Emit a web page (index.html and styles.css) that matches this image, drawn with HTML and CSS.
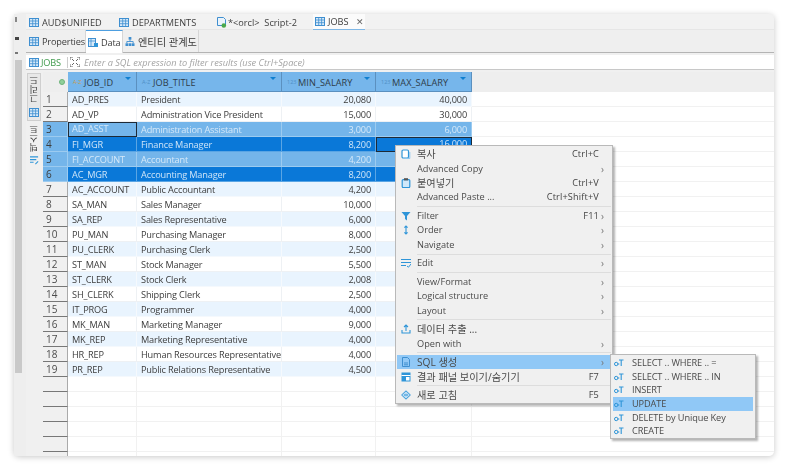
FILE: index.html
```html
<!DOCTYPE html>
<html lang="ko">
<head>
<meta charset="utf-8">
<title>JOBS</title>
<link rel="stylesheet" href="styles.css">
</head>
<body>
<svg class="defs" width="0" height="0">
  <symbol id="tbl" viewBox="0 0 10 9"><rect x=".5" y=".5" width="9" height="8" fill="#d7e9f8" stroke="#3f8fd0"/><path d="M.5 3h9M.5 5.7h9M3.7.5v8M6.6.5v8" stroke="#3f8fd0" stroke-width=".8" fill="none"/></symbol>
  <symbol id="gen" viewBox="0 0 10 8"><circle cx="2.2" cy="5" r="1.7" fill="none" stroke="#2f95d8" stroke-width="1"/><path d="M3.9 5h1.4M5 1h4.5M7.2 1v6" stroke="#2f95d8" stroke-width="1.1" fill="none"/></symbol>
</svg>
<div class="window">
  <div class="strip">
    <span class="mark mark-a"></span>
    <span class="mark mark-b"></span>
    <span class="mark mark-c"></span>
    <span class="scroll"></span>
  </div>
  <div class="main">
    <div class="tabs">
      <div class="tab tab-a"><svg class="ic"><use href="#tbl"/></svg>AUD$UNIFIED</div>
      <div class="tab tab-b"><svg class="ic"><use href="#tbl"/></svg>DEPARTMENTS</div>
      <div class="tab tab-c"><svg class="ic ic-script" viewBox="0 0 11 11"><path d="M1.5.5h6l2 2v6h-8z" fill="#eaf3fb" stroke="#3f8fd0"/><circle cx="7.8" cy="8.5" r="2.3" fill="#4aa84a"/></svg>*&lt;orcl&gt;&nbsp; Script-2</div>
      <div class="tab tab-on"><svg class="ic"><use href="#tbl"/></svg>JOBS<span class="close">✕</span></div>
    </div>
    <div class="subtabs">
      <div class="sub sub-a"><svg class="ic"><use href="#tbl"/></svg>Properties</div>
      <div class="sub sub-on"><svg class="ic" viewBox="0 0 10 9"><rect x=".5" y=".5" width="7" height="8" fill="#d7e9f8" stroke="#3f8fd0"/><path d="M.5 3h7M3 .5v8" stroke="#3f8fd0" stroke-width=".8"/><rect x="6" y="5" width="4" height="4" fill="#2f95d8"/></svg>Data</div>
      <div class="sub sub-c"><svg class="ic" viewBox="0 0 10 10"><rect x="3.5" y="0" width="3" height="3" fill="#3f8fd0"/><path d="M5 3v2M1.5 7V5h7v2" stroke="#3f8fd0" fill="none"/><rect x="0" y="7" width="3" height="3" fill="#3f8fd0"/><rect x="3.5" y="7" width="3" height="3" fill="#3f8fd0"/><rect x="7" y="7" width="3" height="3" fill="#3f8fd0"/></svg><span class="ko">엔티티 관계도</span></div>
    </div>
    <div class="filter-wrap">
      <div class="filter">
        <svg class="ic"><use href="#tbl"/></svg><span class="filter-name">JOBS</span><span class="filter-sep"></span>
        <svg class="ic-expand" viewBox="0 0 10 10"><path d="M0 3V0h3M7 0h3v3M10 7v3H7M3 10H0V7M2 2l2 2M8 2 6 4M8 8 6 6M2 8l2-2" fill="none" stroke="#555" stroke-width=".9"/></svg>
        <span class="filter-hint">Enter a SQL expression to filter results (use Ctrl+Space)</span>
      </div>
    </div>
    <div class="gridpane">
      <div class="side">
        <div class="side-box">
          <span class="side-text">그리드</span>
          <svg class="side-ic"><use href="#tbl"/></svg>
        </div>
        <div class="side-free">
          <span class="side-text">텍스트</span>
          <svg class="side-ic2" viewBox="0 0 10 10"><path d="M0 1h9M0 4h7M0 7h4" stroke="#2f95d8" stroke-width="1.2" fill="none"/><path d="m6 9 3-3" stroke="#2f95d8" stroke-width="1.2"/></svg>
        </div>
      </div>
      <div class="table">
        <div class="row head">
          <div class="corner"><span class="dot"></span></div>
          <div class="hc"><span class="ty ty-az">A-Z</span>JOB_ID<span class="tri"></span></div>
          <div class="hc"><span class="ty">A-Z</span>JOB_TITLE<span class="tri"></span></div>
          <div class="hc"><span class="ty">123</span>MIN_SALARY<span class="tri"></span></div>
          <div class="hc"><span class="ty">123</span>MAX_SALARY<span class="tri"></span></div>
          <div class="rest"></div>
        </div>
        <div class="row odd"><div class="rh">1</div><div class="c">AD_PRES</div><div class="c">President</div><div class="c n">20,080</div><div class="c n">40,000</div><div class="rest"></div></div>
        <div class="row"><div class="rh">2</div><div class="c">AD_VP</div><div class="c">Administration Vice President</div><div class="c n">15,000</div><div class="c n">30,000</div><div class="rest"></div></div>
        <div class="row sel"><div class="rh">3</div><div class="c focus">AD_ASST</div><div class="c">Administration Assistant</div><div class="c n">3,000</div><div class="c n">6,000</div><div class="rest"></div></div>
        <div class="row sel2"><div class="rh">4</div><div class="c">FI_MGR</div><div class="c">Finance Manager</div><div class="c n">8,200</div><div class="c n focus">16,000</div><div class="rest"></div></div>
        <div class="row sel"><div class="rh">5</div><div class="c">FI_ACCOUNT</div><div class="c">Accountant</div><div class="c n">4,200</div><div class="c n"></div><div class="rest"></div></div>
        <div class="row sel2"><div class="rh">6</div><div class="c">AC_MGR</div><div class="c">Accounting Manager</div><div class="c n">8,200</div><div class="c n"></div><div class="rest"></div></div>
        <div class="row odd"><div class="rh">7</div><div class="c">AC_ACCOUNT</div><div class="c">Public Accountant</div><div class="c n">4,200</div><div class="c n"></div><div class="rest"></div></div>
        <div class="row"><div class="rh">8</div><div class="c">SA_MAN</div><div class="c">Sales Manager</div><div class="c n">10,000</div><div class="c n"></div><div class="rest"></div></div>
        <div class="row odd"><div class="rh">9</div><div class="c">SA_REP</div><div class="c">Sales Representative</div><div class="c n">6,000</div><div class="c n"></div><div class="rest"></div></div>
        <div class="row"><div class="rh">10</div><div class="c">PU_MAN</div><div class="c">Purchasing Manager</div><div class="c n">8,000</div><div class="c n"></div><div class="rest"></div></div>
        <div class="row odd"><div class="rh">11</div><div class="c">PU_CLERK</div><div class="c">Purchasing Clerk</div><div class="c n">2,500</div><div class="c n"></div><div class="rest"></div></div>
        <div class="row"><div class="rh">12</div><div class="c">ST_MAN</div><div class="c">Stock Manager</div><div class="c n">5,500</div><div class="c n"></div><div class="rest"></div></div>
        <div class="row odd"><div class="rh">13</div><div class="c">ST_CLERK</div><div class="c">Stock Clerk</div><div class="c n">2,008</div><div class="c n"></div><div class="rest"></div></div>
        <div class="row"><div class="rh">14</div><div class="c">SH_CLERK</div><div class="c">Shipping Clerk</div><div class="c n">2,500</div><div class="c n"></div><div class="rest"></div></div>
        <div class="row odd"><div class="rh">15</div><div class="c">IT_PROG</div><div class="c">Programmer</div><div class="c n">4,000</div><div class="c n"></div><div class="rest"></div></div>
        <div class="row"><div class="rh">16</div><div class="c">MK_MAN</div><div class="c">Marketing Manager</div><div class="c n">9,000</div><div class="c n"></div><div class="rest"></div></div>
        <div class="row odd"><div class="rh">17</div><div class="c">MK_REP</div><div class="c">Marketing Representative</div><div class="c n">4,000</div><div class="c n"></div><div class="rest"></div></div>
        <div class="row"><div class="rh">18</div><div class="c">HR_REP</div><div class="c">Human Resources Representative</div><div class="c n">4,000</div><div class="c n"></div><div class="rest"></div></div>
        <div class="row odd"><div class="rh">19</div><div class="c">PR_REP</div><div class="c">Public Relations Representative</div><div class="c n">4,500</div><div class="c n"></div><div class="rest"></div></div>
        <div class="row blank"><div class="rh"></div><div class="c"></div><div class="c"></div><div class="c"></div><div class="c"></div><div class="rest"></div></div>
        <div class="row blank"><div class="rh"></div><div class="c"></div><div class="c"></div><div class="c"></div><div class="c"></div><div class="rest"></div></div>
        <div class="row blank"><div class="rh"></div><div class="c"></div><div class="c"></div><div class="c"></div><div class="c"></div><div class="rest"></div></div>
        <div class="row blank"><div class="rh"></div><div class="c"></div><div class="c"></div><div class="c"></div><div class="c"></div><div class="rest"></div></div>
        <div class="row blank"><div class="rh"></div><div class="c"></div><div class="c"></div><div class="c"></div><div class="c"></div><div class="rest"></div></div>
        <div class="row blank"><div class="rh"></div><div class="c"></div><div class="c"></div><div class="c"></div><div class="c"></div><div class="rest"></div></div>
      </div>
    </div>
  </div>

  <div class="menu">
    <div class="mi"><svg class="mic" viewBox="0 0 10 10"><rect x="1" y="1" width="6.5" height="8" rx="1.2" fill="#fff" stroke="#2f95d8" stroke-width="1.2"/><path d="M8.8 3v6.5H4" fill="none" stroke="#8cc6ee"/></svg><span class="ml ko">복사</span><span class="ms">Ctrl+C</span><span class="ma"></span></div>
    <div class="mi"><span class="mic"></span><span class="ml">Advanced Copy</span><span class="ma">›</span></div>
    <div class="mi"><svg class="mic" viewBox="0 0 10 10"><rect x="1.2" y="1.6" width="7.6" height="8" rx="1" fill="#cfe8fa" stroke="#2f95d8" stroke-width="1.2"/><rect x="3" y=".2" width="4" height="2.2" fill="#555"/></svg><span class="ml ko">붙여넣기</span><span class="ms">Ctrl+V</span><span class="ma"></span></div>
    <div class="mi"><span class="mic"></span><span class="ml">Advanced Paste ...</span><span class="ms">Ctrl+Shift+V</span><span class="ma"></span></div>
    <div class="msep"></div>
    <div class="mi"><svg class="mic" viewBox="0 0 10 10"><path d="M.5 1h9L6 5v4.5L4 8V5z" fill="#2f95d8"/></svg><span class="ml">Filter</span><span class="ms">F11</span><span class="ma">›</span></div>
    <div class="mi"><svg class="mic" viewBox="0 0 10 10"><path d="M5 1v8M3.4 2.6 5 1l1.6 1.6M3.4 7.4 5 9l1.6-1.6" fill="none" stroke="#2f95d8" stroke-width="1.1"/></svg><span class="ml">Order</span><span class="ma">›</span></div>
    <div class="mi"><span class="mic"></span><span class="ml">Navigate</span><span class="ma">›</span></div>
    <div class="msep"></div>
    <div class="mi"><svg class="mic" viewBox="0 0 10 10"><path d="M0 1.5h10M0 4.5h10M0 7.5h5" stroke="#2f95d8" stroke-width="1.2" fill="none"/><path d="m6 8 1.5 1.2L10 6" stroke="#2f95d8" fill="none"/></svg><span class="ml">Edit</span><span class="ma">›</span></div>
    <div class="msep"></div>
    <div class="mi"><span class="mic"></span><span class="ml">View/Format</span><span class="ma">›</span></div>
    <div class="mi"><span class="mic"></span><span class="ml">Logical structure</span><span class="ma">›</span></div>
    <div class="mi"><span class="mic"></span><span class="ml">Layout</span><span class="ma">›</span></div>
    <div class="msep"></div>
    <div class="mi"><svg class="mic" viewBox="0 0 10 10"><path d="M5 7V1M3 3l2-2 2 2M1 6v3h8V6" fill="none" stroke="#2f95d8" stroke-width="1.1"/></svg><span class="ml ko">데이터 추출 ...</span><span class="ma"></span></div>
    <div class="mi"><span class="mic"></span><span class="ml">Open with</span><span class="ma">›</span></div>
    <div class="msep"></div>
    <div class="mi hot"><svg class="mic" viewBox="0 0 10 10"><path d="M1.5.5h5l2 2v7h-7z" fill="none" stroke="#3f8fd0"/><path d="M3 6h4M3 7.8h4" stroke="#3f8fd0"/></svg><span class="ml ko">SQL 생성</span><span class="ma">›</span></div>
    <div class="mi"><svg class="mic" viewBox="0 0 10 10"><rect x=".5" y=".5" width="9" height="9" fill="#2f95d8"/><path d="M.5 3.5h9" stroke="#fff"/><rect x="5" y="5" width="3.5" height="3.5" fill="#fff"/></svg><span class="ml ko">결과 패널 보이기/숨기기</span><span class="ms">F7</span><span class="ma"></span></div>
    <div class="msep"></div>
    <div class="mi"><svg class="mic" viewBox="0 0 10 10"><path d="M5 .8 9.4 5 5 9.2.6 5z" fill="#bcdcf3" stroke="#2f95d8"/><path d="M3 5h4" stroke="#2f95d8"/></svg><span class="ml ko">새로 고침</span><span class="ms">F5</span><span class="ma"></span></div>
  </div>

  <div class="submenu">
    <div class="si"><svg class="sic"><use href="#gen"/></svg>SELECT .. WHERE .. =</div>
    <div class="si"><svg class="sic"><use href="#gen"/></svg>SELECT .. WHERE .. IN</div>
    <div class="si"><svg class="sic"><use href="#gen"/></svg>INSERT</div>
    <div class="si hot"><svg class="sic"><use href="#gen"/></svg>UPDATE</div>
    <div class="si"><svg class="sic"><use href="#gen"/></svg>DELETE by Unique Key</div>
    <div class="si"><svg class="sic"><use href="#gen"/></svg>CREATE</div>
  </div>
</div>
</body>
</html>
```

FILE: styles.css
```css
* { box-sizing: border-box; }
html, body { margin: 0; padding: 0; background: #fff; }
body {
  width: 789px;
  height: 470px;
  overflow: hidden;
  padding: 14px 15px 14px 14px;
  font-family: "Open Sans", "Noto Sans CJK KR", sans-serif;
  font-size: 9.2px;
  letter-spacing: -.16px;
  color: #3c3c3c;
}
.ko { font-size: 10.2px; letter-spacing: 0; }
.defs { position: absolute; }
.window {
  position: relative;
  width: 760px;
  height: 442px;
  display: flex;
  background: #f0f0f0;
  border-radius: 5px;
  box-shadow: 0 1px 6px rgba(0, 0, 0, .22);
  filter: blur(.45px);
}
.strip {
  width: 12px;
  flex: none;
  position: relative;
  background: #eee;
}
.mark { position: absolute; left: 1px; background: #444; }
.mark-a { top: 3px; width: 2px; height: 5px; background: #888; }
.mark-b { top: 23px; width: 4px; height: 3px; }
.mark-c { top: 38px; width: 3px; height: 2px; background: #777; }
.scroll {
  position: absolute;
  left: 1px;
  top: 46px;
  width: 7px;
  height: 313px;
  background: #c9c9c9;
}
.main { flex: 1; min-width: 0; display: flex; flex-direction: column; overflow: hidden; border-radius: 0 5px 5px 0; }
.tabs {
  height: 16px;
  flex: none;
  display: flex;
  align-items: center;
  border-bottom: 1px solid #e6e6e6;
  background: #f2f2f2;
}
.tab { display: flex; align-items: center; height: 15px; padding-top: 1px; white-space: nowrap; letter-spacing: 0; }
.ic { width: 10px; height: 9px; margin-right: 3px; flex: none; }
.ic-script { width: 11px; height: 11px; margin-right: 1px; }
.tab-a { margin-left: 3px; width: 90px; }
.tab-b { width: 97px; }
.tab-c { width: 97px; }
.tab-on {
  width: 52px;
  padding-left: 2px;
  height: 16px;
  background: #fbfbfb;
  border-bottom: 1.5px solid #7fb7e6;
}
.close { margin-left: 7px; font-size: 9px; color: #666; }
.subtabs {
  height: 23px;
  flex: none;
  display: flex;
  border-bottom: 1px solid #b4b4b4;
  background: #efefef;
}
.sub { display: flex; align-items: center; height: 22px; white-space: nowrap; padding-top: 1px; }
.sub-a { width: 60px; padding-left: 3px; border-right: 1px solid #d6d6d6; }
.sub-on {
  width: 37px;
  padding-left: 2px;
  background: #fff;
  border-top: 1.5px solid #4d9ee0;
  border-right: 1px solid #d6d6d6;
  height: 23px;
}
.sub-c { width: 76px; padding-left: 2px; border-right: 1px solid #d6d6d6; }
.filter-wrap { height: 19px; flex: none; padding-top: 2px; }
.filter {
  height: 15px;
  display: flex;
  align-items: center;
  padding-left: 3px;
  background: #fff;
  border-bottom: 1px solid #c8c8c8;
}
.filter-name { color: #3f9a4c; width: 24px; margin-left: -1px; }
.filter-sep { width: 1px; height: 11px; margin: 0 2px; background: #ccc; }
.ic-expand { width: 10px; height: 10px; flex: none; margin-right: 3px; }
.filter-hint { font-style: italic; color: #a4a4a4; margin-left: 1px; letter-spacing: 0; }
.gridpane { flex: 1; min-height: 0; display: flex; overflow: hidden; }
.side { width: 17px; flex: none; padding: 1px 0 0 1px; }
.side-box {
  width: 14px;
  height: 48px;
  display: flex;
  flex-direction: column;
  align-items: center;
  background: #e8e8e8;
  border: 1px solid #cfcfcf;
  padding-top: 2px;
}
.side-free { width: 14px; display: flex; flex-direction: column; align-items: center; padding-top: 4px; }
.side-text {
  writing-mode: vertical-rl;
  transform: rotate(180deg);
  font-size: 9px;
  letter-spacing: 0;
  line-height: 12px;
  height: 27px;
  color: #444;
}
.side-ic { width: 10px; height: 9px; margin-top: 5px; }
.side-ic2 { width: 9px; height: 9px; margin-top: 4px; }
.table { flex: 1; min-width: 0; }
.row {
  display: grid;
  grid-template-columns: 25px 69px 145px 94px 96px 1fr;
  grid-template-rows: 15px;
  height: 15px;
  line-height: 15px;
}
.head { height: 20px; grid-template-rows: 20px; line-height: 19px; }
.corner { background: #eee; display: flex; align-items: center; justify-content: flex-end; padding-right: 3px; }
.dot { width: 6px; height: 6px; border-radius: 50%; background: #8fcf9a; border: 1px solid #6db37a; }
.hc {
  position: relative;
  display: flex;
  align-items: center;
  background: #76b6eb;
  padding: 1px 0 0 5px;
  border-right: 1px solid #5b90bf;
  border-bottom: 1px solid #5b90bf;
  color: #2e3d4a;
  letter-spacing: .05px;
}
.ty { font-size: 5.5px; color: #4f8fc5; width: 11px; letter-spacing: 0; flex: none; }
.ty-az { color: #c99a4e; }
.tri {
  position: absolute;
  right: 5px;
  top: 5px;
  width: 0;
  height: 0;
  border: 3px solid transparent;
  border-top: 3px solid #0f7fd0;
}
.rest { background: #fff; border-bottom: 1px solid #f1f1f1; }
.head .rest { background: #eee; border-bottom: 0; }
.rh {
  background: #f0f0f0;
  border-bottom: 1px solid #777;
  border-right: 1px solid #aaa;
  padding-left: 3px;
  font-size: 10px;
  letter-spacing: 0;
  color: #4c4c4c;
}
.c {
  padding: 0 4px;
  background: #fff;
  border-right: 1px solid #eef1f4;
  border-bottom: 1px solid #eef1f4;
  white-space: nowrap;
  overflow: hidden;
}
.n { text-align: right; }
.odd .c { background: #e9f4fe; border-color: #f5f9fd; }
.sel .c, .sel .rh { background: #74b5ea; color: #d6e9f9; border-color: #9ccbf0; }
.sel2 .c { background: #0a78d8; color: #cfe5f8; border-color: #5aa5e4; }
.sel2 .rh { background: #74b5ea; border-color: #9ccbf0; }
.sel .rh, .sel2 .rh { color: #3c3c3c; }
.row .focus { border: 1.5px solid #1e2a36; line-height: 12px; padding-left: 3px; }
.blank .c { border-color: #f1f1f1; }
.menu {
  position: absolute;
  left: 381px;
  top: 131px;
  width: 218px;
  height: 259px;
  padding: 1px;
  background: #f0f0f0;
  border: 1px solid #b9b9b9;
  box-shadow: 2px 2px 2px rgba(0, 0, 0, .3);
}
.mi { display: flex; align-items: center; height: 14.4px; line-height: 12px; white-space: nowrap; color: #4a4a4a; letter-spacing: 0; }
.mic { width: 10px; height: 10px; margin: 0 6px 0 4px; flex: none; }
.ml { flex: 1; }
.ms { color: #444; margin-right: -1px; letter-spacing: .15px; }
.ma { width: 13px; flex: none; padding-left: 3px; color: #777; font-size: 10px; line-height: 10px; }
.msep { height: 1px; margin: 1.6px 0 1.6px 20px; background: #ddd; }
.hot { background: #90c8f6; }
.submenu {
  position: absolute;
  left: 596px;
  top: 340px;
  width: 146px;
  height: 85px;
  padding: 1.5px 2px;
  background: #f0f0f0;
  border: 1px solid #b9b9b9;
  box-shadow: 2px 2px 2px rgba(0, 0, 0, .3);
}
.si { display: flex; align-items: center; height: 13.6px; line-height: 12px; white-space: nowrap; color: #4a4a4a; letter-spacing: -.1px; }
.sic { width: 10px; height: 8px; margin: 0 8px 0 1px; flex: none; }
```
